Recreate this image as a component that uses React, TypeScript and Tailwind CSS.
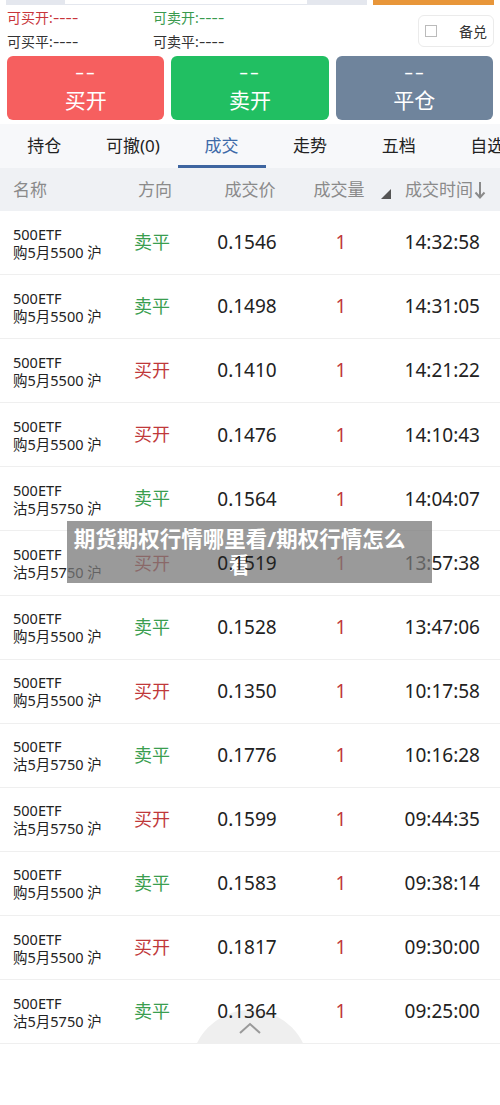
import React from "react";

type Row = { a: string; b: string; dir: "卖平" | "买开"; price: string; time: string };

const rows: Row[] = [
  { a: "500ETF", b: "购5月5500 沪", dir: "卖平", price: "0.1546", time: "14:32:58" },
  { a: "500ETF", b: "购5月5500 沪", dir: "卖平", price: "0.1498", time: "14:31:05" },
  { a: "500ETF", b: "购5月5500 沪", dir: "买开", price: "0.1410", time: "14:21:22" },
  { a: "500ETF", b: "购5月5500 沪", dir: "买开", price: "0.1476", time: "14:10:43" },
  { a: "500ETF", b: "沽5月5750 沪", dir: "卖平", price: "0.1564", time: "14:04:07" },
  { a: "500ETF", b: "沽5月5750 沪", dir: "买开", price: "0.1519", time: "13:57:38" },
  { a: "500ETF", b: "购5月5500 沪", dir: "卖平", price: "0.1528", time: "13:47:06" },
  { a: "500ETF", b: "购5月5500 沪", dir: "买开", price: "0.1350", time: "10:17:58" },
  { a: "500ETF", b: "沽5月5750 沪", dir: "卖平", price: "0.1776", time: "10:16:28" },
  { a: "500ETF", b: "沽5月5750 沪", dir: "买开", price: "0.1599", time: "09:44:35" },
  { a: "500ETF", b: "购5月5500 沪", dir: "卖平", price: "0.1583", time: "09:38:14" },
  { a: "500ETF", b: "购5月5500 沪", dir: "买开", price: "0.1817", time: "09:30:00" },
  { a: "500ETF", b: "沽5月5750 沪", dir: "卖平", price: "0.1364", time: "09:25:00" },
];

const tabs = ["持仓", "可撤(0)", "成交", "走势", "五档", "自选"];

function Dashes() {
  return <span className="inline-block w-[26px] origin-left scale-x-[1.4]">----</span>;
}

export default function App() {
  return (
    <div
      className="relative w-[500px] h-[1105px] overflow-hidden bg-white"
      style={{ fontFamily: '"Noto Sans", "Noto Sans CJK SC", sans-serif' }}
    >
      {/* cut-off input row */}
      <div className="flex h-[5px] px-[6px] gap-[6px]">
        <div className="flex w-[361px]">
          <div className="w-[59px] bg-[#e4e7ee]" />
          <div className="flex-1 bg-white border-b border-[#e4e7ee]" />
          <div className="w-[60px] bg-[#e4e7ee]" />
        </div>
        <div className="flex-1 bg-[#e8963a]" />
      </div>

      {/* available rows */}
      <div className="flex items-start h-[51px]">
        <div className="flex flex-col pl-[7px] w-[153px] text-[14px] leading-[24px] pt-[1px]">
          <span className="text-[#c8353a] whitespace-nowrap">
            可买开:<Dashes />
          </span>
          <span className="text-[#333] whitespace-nowrap">
            可买平:<Dashes />
          </span>
        </div>
        <div className="flex flex-col w-[265px] text-[14px] leading-[24px] pt-[1px]">
          <span className="text-[#3a9a4e] whitespace-nowrap">
            可卖开:<Dashes />
          </span>
          <span className="text-[#333] whitespace-nowrap">
            可卖平:<Dashes />
          </span>
        </div>
        <div className="mt-[10px] w-[76px] h-[32px] rounded-[6px] border border-[#ebebeb] flex items-center pl-[6px] pr-[6px] justify-between">
          <span className="w-[12px] h-[12px] border border-[#bbb] bg-white" />
          <span className="text-[14px] text-[#333]">备兑</span>
        </div>
      </div>

      {/* action buttons */}
      <div className="flex px-[7px] gap-[7px] h-[64px]">
        {[
          ["买开", "bg-[#f65f5f]"],
          ["卖开", "bg-[#21bf62]"],
          ["平仓", "bg-[#6f849c]"],
        ].map(([t, c]) => (
          <div key={t} className={`flex-1 rounded-[6px] ${c} flex flex-col items-center text-white`}>
            <span className="inline-block text-[18px] leading-[20px] mt-[6px] tracking-[1px] scale-x-[1.6]">--</span>
            <span className="text-[21px] leading-[30px] mt-[3px]">{t}</span>
          </div>
        ))}
      </div>

      {/* tabs */}
      <div className="mt-[4px] h-[44px] bg-[#f7f8fa] flex overflow-hidden">
        {tabs.map((t) => (
          <div
            key={t}
            className={`relative shrink-0 w-[88.6px] flex items-center justify-center text-[17px] whitespace-nowrap ${
              t === "成交" ? "text-[#3d6aa8]" : "text-[#222]"
            }`}
          >
            {t}
            {t === "成交" && <span className="absolute bottom-0 left-[1px] right-0 h-[3px] bg-[#3e65a0]" />}
          </div>
        ))}
      </div>

      {/* header */}
      <div className="h-[43px] bg-[#eff1f4] flex items-center text-[17px] text-[#8a8a8a]">
        <div className="w-[120px] pl-[13px]">名称</div>
        <div className="w-[70px] text-center">方向</div>
        <div className="w-[120px] text-center">成交价</div>
        <div className="w-[58px] text-center">成交量</div>
        <div className="ml-[13px] w-[10px] flex items-center pt-[8px]">
          <svg width="10" height="10" viewBox="0 0 10 10">
            <path d="M10 0 L10 10 L0 10 Z" fill="#555" />
          </svg>
        </div>
        <div className="ml-[14px] flex items-center">
          <span>成交时间</span>
          <svg width="12" height="18" viewBox="0 0 12 18" className="ml-[1px]">
            <path d="M6 1 V16" stroke="#8a8a8a" strokeWidth="2" />
            <path d="M1.5 11.5 L6 16.5 L10.5 11.5" stroke="#8a8a8a" strokeWidth="2" fill="none" />
          </svg>
        </div>
      </div>

      {/* rows */}
      <div className="relative overflow-hidden">
        {rows.map((r, i) => (
          <div key={i} className="h-[64.1px] flex items-center border-b border-[#efefef]">
            <div className="w-[120px] pl-[13px] flex flex-col text-[14.5px] leading-[18px] text-[#222]">
              <span>{r.a}</span>
              <span className="whitespace-nowrap">{r.b}</span>
            </div>
            <div
              className={`w-[64px] text-center text-[18px] ${
                r.dir === "卖平" ? "text-[#3a9e4f]" : "text-[#c0383a]"
              }`}
            >
              {r.dir}
            </div>
            <div className="w-[126px] text-center text-[19px] text-[#222] relative z-10">{r.price}</div>
            <div className="w-[62px] text-center text-[19px] text-[#c0383a]">1</div>
            <div className="flex-1 text-right pr-[20px] text-[19px] text-[#222]">{r.time}</div>
          </div>
        ))}
        {/* scroll-top button */}
        <div className="absolute left-[191px] top-[799px] w-[118px] h-[118px] rounded-full bg-[#efefef] flex justify-center pt-[12px]">
          <svg width="22" height="12" viewBox="0 0 22 12">
            <path d="M1 11 L11 2 L21 11" stroke="#9a9a9a" strokeWidth="2" fill="none" />
          </svg>
        </div>
      </div>

      {/* overlay caption */}
      <div className="absolute left-[67px] top-[521px] w-[365px] h-[62px] bg-[rgba(120,120,120,0.75)] pl-[4px] pr-[24px] pt-[5px] text-center text-white font-bold text-[21.5px] leading-[26px] whitespace-nowrap">
        期货期权行情哪里看/期权行情怎么
        <br />看
      </div>
    </div>
  );
}
